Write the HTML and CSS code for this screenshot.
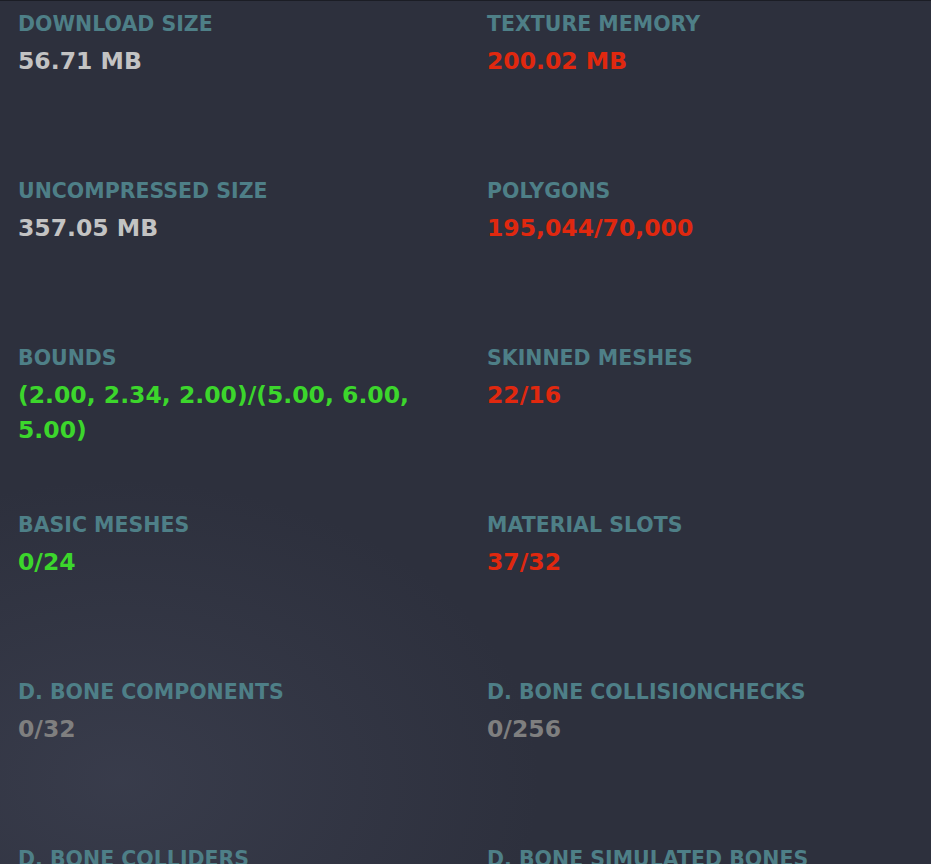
FILE: index.html
```html
<!DOCTYPE html>
<html lang="en">
  <head>
    <meta charset="UTF-8" />
    <meta name="viewport" content="width=device-width, initial-scale=1.0" />
    <title>Avatar Performance Stats</title>
    <link rel="stylesheet" href="styles.css">
  </head>
  <body>
    <div class="stats-panel">
      <div class="stat">
        <div class="stat-label">Download Size</div>
        <div class="stat-value">56.71 MB</div>
      </div>
      <div class="stat">
        <div class="stat-label">Texture Memory</div>
        <div class="stat-value bad">200.02 MB</div>
      </div>

      <div class="stat">
        <div class="stat-label">Uncompressed Size</div>
        <div class="stat-value">357.05 MB</div>
      </div>
      <div class="stat">
        <div class="stat-label">Polygons</div>
        <div class="stat-value bad">195,044/70,000</div>
      </div>

      <div class="stat">
        <div class="stat-label">Bounds</div>
        <div class="stat-value good">(2.00, 2.34, 2.00)/(5.00, 6.00, 5.00)</div>
      </div>
      <div class="stat">
        <div class="stat-label">Skinned Meshes</div>
        <div class="stat-value bad">22/16</div>
      </div>

      <div class="stat">
        <div class="stat-label">Basic Meshes</div>
        <div class="stat-value good">0/24</div>
      </div>
      <div class="stat">
        <div class="stat-label">Material Slots</div>
        <div class="stat-value bad">37/32</div>
      </div>

      <div class="stat">
        <div class="stat-label">D. Bone Components</div>
        <div class="stat-value muted">0/32</div>
      </div>
      <div class="stat">
        <div class="stat-label">D. Bone Collisionchecks</div>
        <div class="stat-value muted">0/256</div>
      </div>

      <div class="stat">
        <div class="stat-label">D. Bone Colliders</div>
        <div class="stat-value muted">0/32</div>
      </div>
      <div class="stat">
        <div class="stat-label">D. Bone Simulated Bones</div>
        <div class="stat-value muted">0/256</div>
      </div>
    </div>
  </body>
</html>
```

FILE: styles.css
```css
:root {
  --bg: #2d303d;
  --label: #4e7f87;
  --value: #c3c3c3;
  --bad: #e0280f;
  --good: #3cd62c;
  --muted: #7f7f7f;
}

* {
  box-sizing: border-box;
  margin: 0;
  padding: 0;
}

html,
body {
  height: 100%;
  overflow: hidden;
}

body {
  background: radial-gradient(
      ellipse 420px 300px at 120px 780px,
      rgba(70, 74, 92, 0.45),
      rgba(70, 74, 92, 0)
    ),
    var(--bg);
  border-top: 1px solid #1b1d25;
  font-family: "DejaVu Sans", Verdana, sans-serif;
}

.stats-panel {
  display: grid;
  grid-template-columns: 469px 444px;
  grid-auto-rows: 167px;
  padding: 8px 0 0 18px;
}

.stat {
  padding-right: 40px;
}

.stat-label {
  color: var(--label);
  font-size: 20.5px;
  font-weight: 700;
  text-transform: uppercase;
  line-height: 30px;
}

.stat-value {
  color: var(--value);
  font-size: 23.5px;
  font-weight: 700;
  line-height: 35px;
  margin-top: 5px;
}

.stat-value.bad {
  color: var(--bad);
}

.stat-value.good {
  color: var(--good);
}

.stat-value.muted {
  color: var(--muted);
}
```
